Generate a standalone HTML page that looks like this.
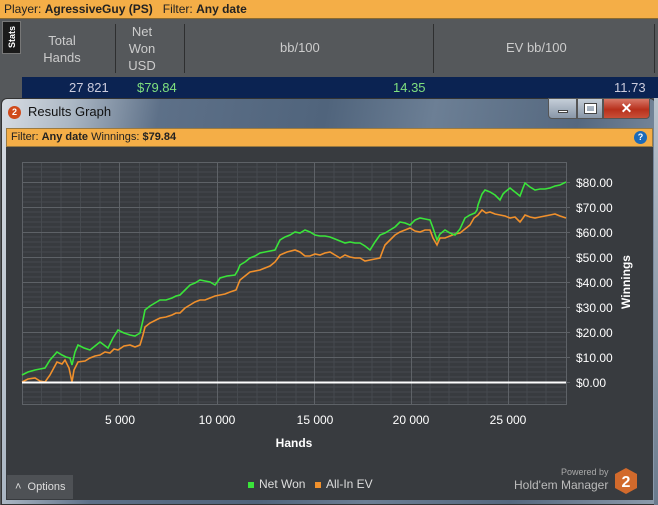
<!DOCTYPE html>
<html><head><meta charset="utf-8"><style>
*{margin:0;padding:0;box-sizing:border-box}
body{width:658px;height:505px;overflow:hidden;background:#55585b;font-family:"Liberation Sans",sans-serif;position:relative;font-size:12px}
.a{position:absolute}
</style></head><body>
<div class="a" style="left:0;top:0;width:658px;height:19px;background:#f4ae47;border-bottom:1px solid #8a6a30;font-size:12px;line-height:19px;padding-left:4px;color:#222">Player: <b>AgressiveGuy (PS)</b>&nbsp;&nbsp; Filter: <b>Any date</b></div>
<div class="a" style="left:2px;top:21px;width:19px;height:33px;background:#1a1a1a;border:1px solid #777"></div>
<div class="a" style="left:4px;top:48px;width:18px;color:#fff;font-size:9px;font-weight:bold;transform:rotate(-90deg);transform-origin:0 0;white-space:nowrap;line-height:16px">Stats</div>
<div class="a" style="left:115px;top:24px;width:1px;height:49px;background:#2e2f30"></div>
<div class="a" style="left:184px;top:24px;width:1px;height:49px;background:#2e2f30"></div>
<div class="a" style="left:433px;top:24px;width:1px;height:49px;background:#2e2f30"></div>
<div class="a" style="left:654px;top:24px;width:1px;height:49px;background:#2e2f30"></div>
<div class="a" style="left:38px;top:32px;width:48px;text-align:center;color:#ccc;line-height:17px;font-size:13px">Total Hands</div>
<div class="a" style="left:123px;top:23px;width:38px;text-align:center;color:#ccc;line-height:17px;font-size:13px">Net Won USD</div>
<div class="a" style="left:280px;top:40px;color:#ccc;font-size:13px">bb/100</div>
<div class="a" style="left:506px;top:40px;color:#ccc;font-size:13px">EV bb/100</div>
<div class="a" style="left:22px;top:77px;width:636px;height:21px;background:#0b2352"></div>
<div class="a" style="left:69px;top:80px;color:#ccd;font-size:13px">27 821</div>
<div class="a" style="left:137px;top:80px;color:#7fe07f;font-size:13px">$79.84</div>
<div class="a" style="left:393px;top:80px;color:#7fe07f;font-size:13px">14.35</div>
<div class="a" style="left:614px;top:80px;color:#ccd;font-size:13px">11.73</div>
<div class="a" style="left:1px;top:98px;width:655px;height:407px;background:linear-gradient(100deg,#d8dde3 0%,#aab6c3 10%,#5d7088 22%,#50647c 45%,#6c7f95 60%,#55687f 80%,#8c9bac 100%);border:1px solid #333;border-radius:6px 6px 0 0"></div>
<div class="a" style="left:8px;top:106px;width:13px;height:13px;border-radius:50%;background:#d04a1a;color:#fff;font-size:9px;font-weight:bold;text-align:center;line-height:13px">2</div>
<div class="a" style="left:28px;top:104px;color:#111;font-size:13px">Results Graph</div>
<div class="a" style="left:548px;top:98px;width:29px;height:21px;background:linear-gradient(#c5ced8,#8997a8);border:1px solid #555;border-radius:0 0 0 4px"><div class="a" style="left:9px;top:11px;width:10px;height:3px;background:#fff;border:1px solid #444"></div></div>
<div class="a" style="left:577px;top:98px;width:26px;height:21px;background:linear-gradient(#c5ced8,#8997a8);border:1px solid #555"><div class="a" style="left:7px;top:5px;width:11px;height:9px;border:2px solid #fff;outline:1px solid #444"></div></div>
<div class="a" style="left:603px;top:98px;width:47px;height:21px;background:linear-gradient(#d87868,#b8301c 55%,#c85038);border:1px solid #555;border-radius:0 0 4px 0;color:#fff;font-weight:bold;text-align:center;font-size:14px;line-height:19px">✕</div>
<div class="a" style="left:6px;top:128px;width:647px;height:19px;background:#f4ae47;border:1px solid #9a7a40;font-size:11px;line-height:17px;padding-left:4px;color:#222">Filter: <b>Any date</b> Winnings: <b>$79.84</b></div>
<div class="a" style="left:634px;top:131px;width:13px;height:13px;border-radius:50%;background:#1c6ab8;color:#fff;font-size:9px;font-weight:bold;text-align:center;line-height:13px">?</div>
<div class="a" style="left:6px;top:147px;width:647px;height:353px;background:#383b3f"></div>
<svg class="a" style="left:0;top:0" width="658" height="505">
<g stroke="#464a4f" stroke-width="1">
<path d="M22 167H566M22 172H566M22 177H566M22 187H566M22 192H566M22 197H566M22 202H566M22 212H566M22 217H566M22 222H566M22 227H566M22 237H566M22 242H566M22 247H566M22 252H566M22 262H566M22 267H566M22 272H566M22 277H566M22 287H566M22 292H566M22 297H566M22 302H566M22 312H566M22 317H566M22 322H566M22 327H566M22 337H566M22 342H566M22 347H566M22 352H566M22 362H566M22 367H566M22 372H566M22 377H566M22 387H566M22 392H566M22 397H566M22 402H566"/>
<path d="M41.5 162V405M61 162V405M80.5 162V405M100 162V405M139.5 162V405M159 162V405M178.5 162V405M198 162V405M237.5 162V405M257 162V405M276.5 162V405M296 162V405M334 162V405M353 162V405M372 162V405M391 162V405M430 162V405M449 162V405M468 162V405M487 162V405M527 162V405M546 162V405"/>
</g>
<g stroke="#5e6267" stroke-width="1">
<path d="M22 162.5H566M22 182.5H566M22 207.5H566M22 232.5H566M22 257.5H566M22 282.5H566M22 307.5H566M22 332.5H566M22 357.5H566M22 404.5H566M22.5 162V405M119.5 162V405M217.5 162V405M314.5 162V405M411.5 162V405M508.5 162V405M566.5 162V405"/>
<path d="M566 182.5h4M566 207.5h4M566 232.5h4M566 257.5h4M566 282.5h4M566 307.5h4M566 332.5h4M566 357.5h4M566 382.5h4"/>
</g>
<polyline fill="none" stroke="#f0902c" stroke-width="1.6" points="22,382 28,379 35,378 40,381 45,382 50,375 57,362 62,364 65,360 69,368 72,382 74,370 78,362 85,361 90,358 95,356 100,355 105,352 110,353 114,349 118,350 124,346 130,345 135,347 140,345 143,335 145,327 150,323 156,320 160,318 166,317 172,315 176,313 180,313 185,308 190,305 195,302 200,300 205,300 210,298 215,296 220,295 225,294 230,292 236,290 240,280 245,276 250,272 255,271 260,270 265,268 270,266 275,262 278,258 280,255 287,252 295,250 300,252 305,256 310,256 315,254 320,255 325,253 330,252 335,255 340,258 345,255 350,257 355,258 360,258 365,261 370,260 375,259 380,258 383,250 385,245 390,240 395,235 400,232 405,230 410,228 415,231 420,232 425,230 430,230 433,238 437,245 440,238 445,238 450,236 455,234 460,233 465,229 470,225 474,218 478,215 482,210 486,213 490,212 495,214 500,215 505,216 510,218 515,217 520,222 523,218 525,215 530,217 535,218 540,217 545,216 550,215 555,214 560,216 566,218"/>
<polyline fill="none" stroke="#3ae43a" stroke-width="1.6" points="22,375 28,372 35,370 40,369 45,368 50,360 57,352 62,355 66,357 70,358 72,365 75,352 78,345 84,348 90,350 95,346 100,342 104,345 108,348 113,338 118,330 124,333 130,335 135,336 140,333 143,320 145,310 150,306 155,303 160,300 166,300 172,298 176,296 180,295 185,290 190,285 195,283 200,280 205,281 210,282 215,285 218,281 220,278 227,276 235,275 238,270 240,265 245,262 250,258 255,256 260,253 265,252 270,251 275,250 278,244 280,240 285,237 290,235 295,232 300,233 305,230 310,232 315,235 320,236 325,236 330,237 335,239 340,241 345,243 350,242 355,243 360,243 365,246 370,250 375,242 380,235 385,233 390,230 395,227 400,222 405,223 410,225 415,220 420,218 425,219 430,220 433,228 437,240 440,234 445,230 450,233 455,235 460,229 465,218 470,215 475,213 477,210 478,205 482,194 485,190 490,192 495,195 500,200 503,194 505,192 510,188 515,192 520,196 523,188 525,183 530,187 535,190 540,189 545,189 550,188 555,186 560,185 566,182"/>
<line x1="22" y1="382.5" x2="566" y2="382.5" stroke="#fff" stroke-width="2"/>
<g fill="#fff" font-family="Liberation Sans, sans-serif" font-size="12">
<text x="576" y="187">$80.00</text><text x="576" y="212">$70.00</text><text x="576" y="237">$60.00</text><text x="576" y="262">$50.00</text><text x="576" y="287">$40.00</text><text x="576" y="312">$30.00</text><text x="576" y="337">$20.00</text><text x="576" y="362">$10.00</text><text x="576" y="387">$0.00</text>
<g text-anchor="middle"><text x="120" y="424">5 000</text><text x="217" y="424">10 000</text><text x="315" y="424">15 000</text><text x="411" y="424">20 000</text><text x="508" y="424">25 000</text></g>
<text x="294" y="447" text-anchor="middle" font-weight="bold">Hands</text>
<text transform="translate(630,282) rotate(-90)" text-anchor="middle" font-weight="bold">Winnings</text>
</g>
</svg>
<div class="a" style="left:7px;top:475px;width:66px;height:24px;background:#4e5155;color:#ddd;font-size:11px;line-height:24px;padding-left:8px">˄ &nbsp;Options</div>
<div class="a" style="left:248px;top:482px;width:6px;height:6px;background:#3ae43a"></div>
<div class="a" style="left:259px;top:477px;color:#ddd;font-size:12px">Net Won</div>
<div class="a" style="left:315px;top:482px;width:6px;height:6px;background:#f0902c"></div>
<div class="a" style="left:326px;top:477px;color:#ddd;font-size:12px">All-In EV</div>
<div class="a" style="left:561px;top:467px;color:#aaa;font-size:9px">Powered by</div>
<div class="a" style="left:514px;top:478px;color:#bbb;font-size:12px">Hold'em Manager</div>
<svg class="a" style="left:614px;top:467px" width="24" height="28"><polygon points="12,1 23,7 23,21 12,27 1,21 1,7" fill="#d26a2c"/><text x="12" y="20" text-anchor="middle" fill="#fff" font-size="16" font-weight="bold" font-family="Liberation Sans,sans-serif">2</text></svg>
<div class="a" style="left:654px;top:98px;width:4px;height:407px;background:linear-gradient(#b8c2cc,#6a7a8c)"></div>
</body></html>
